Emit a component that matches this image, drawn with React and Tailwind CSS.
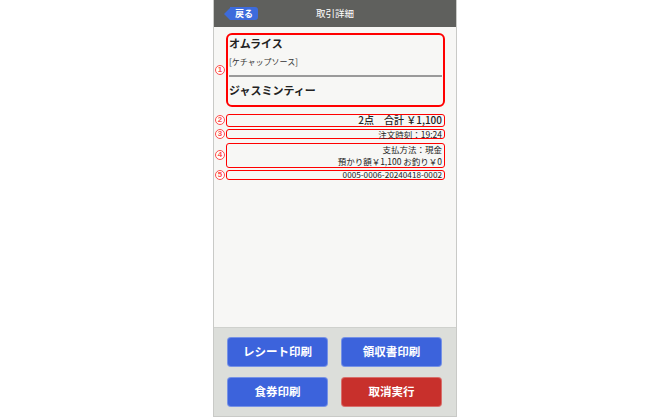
import React from "react";

const font = { fontFamily: '"Noto Sans CJK JP", "Noto Sans", sans-serif' };

// 注釈付きの行（丸数字 + 赤枠）
const Marked = ({ num, className, children }) => (
  <div className="flex items-center">
    <div className="w-[12px] shrink-0 flex justify-center">
      <span
        className="w-[10px] h-[10px] shrink-0 rounded-full border border-[#ff4d4d] bg-white flex items-center justify-center text-[8px] font-bold leading-none text-[#ff4d4d]"
        style={{ fontFamily: '"Liberation Sans", Arial, sans-serif' }}
      >
        {num}
      </span>
    </div>
    <div className={"flex-1 border-[#ff0000] " + className}>{children}</div>
  </div>
);

const ActionButton = ({ label, red }) => (
  <button
    className={
      "h-[30px] rounded-[4px] border border-white/30 text-white text-[11.5px] font-bold " +
      (red ? "bg-[#c8302c]" : "bg-[#3c63dc]")
    }
  >
    {label}
  </button>
);

export default function App() {
  return (
    <div className="w-[670px] h-[418px] bg-white flex justify-center" style={font}>
      <div className="w-[244px] h-[417px] flex flex-col border-x border-b border-[#c9cac7]">
        {/* Header */}
        <div className="h-[27px] bg-[#5f605d] grid grid-cols-[1fr_auto_1fr] items-center px-[10px]">
          <div className="flex items-center">
            <div className="w-0 h-0 border-y-[6.5px] border-y-transparent border-r-[6px] border-r-[#3d6bdb]"></div>
            <div className="h-[13px] w-[28px] bg-[#3d6bdb] rounded-r-[3px] flex items-center justify-center text-white text-[9px] font-bold leading-none">
              戻る
            </div>
          </div>
          <div className="text-white text-[9.5px] leading-none">取引詳細</div>
          <div></div>
        </div>

        {/* Content */}
        <div className="flex-1 bg-[#f7f7f5] pr-[11px] pt-[6px] flex flex-col">
          <Marked num="1" className="border-2 rounded-[6px] h-[74px] px-[1px] flex flex-col">
            <div className="h-[16px] flex items-center text-[11px] font-bold text-[#222]">オムライス</div>
            <div className="h-[22px] flex items-center text-[8px] text-[#333]">[ケチャップソース]</div>
            <div className="mt-[2px] h-[1.5px] bg-[#9a9a9a]"></div>
            <div className="h-[28px] flex items-center text-[11px] font-bold text-[#222]">ジャスミンティー</div>
          </Marked>

          <div className="mt-[7px]">
            <Marked num="2" className="border-[1.5px] rounded-[3px] h-[12.5px] flex items-center justify-end pr-[2px]">
              <span className="text-[10px] font-medium text-[#222] leading-none">2点　合計 ￥1,100</span>
            </Marked>
          </div>
          <div className="mt-[2px]">
            <Marked num="3" className="border-[1.5px] rounded-[3px] h-[10.5px] flex items-center justify-end pr-[2px]">
              <span className="text-[8.5px] text-[#222] leading-none">注文時刻：19:24</span>
            </Marked>
          </div>
          <div className="mt-[3.5px]">
            <Marked num="4" className="border-[1.5px] rounded-[3px] h-[25.5px] flex flex-col items-end justify-center pr-[2px] gap-[3.5px]">
              <span className="text-[8.5px] text-[#222] leading-none">支払方法：現金</span>
              <span className="text-[8.5px] text-[#222] leading-none">預かり額￥1,100 お釣り￥0</span>
            </Marked>
          </div>
          <div className="mt-[1.5px]">
            <Marked num="5" className="border-[1.5px] rounded-[3px] h-[10px] flex items-center justify-end pr-[2px]">
              <span className="text-[8.2px] text-[#222] leading-none">0005-0006-20240418-0002</span>
            </Marked>
          </div>
        </div>

        {/* Footer buttons */}
        <div className="h-[89px] bg-[#dcdeda] border-t border-[#cfd1cd] grid grid-cols-2 gap-x-[13px] gap-y-[10px] pl-[13px] pr-[14px] pt-[9px] content-start">
          <ActionButton label="レシート印刷" />
          <ActionButton label="領収書印刷" />
          <ActionButton label="食券印刷" />
          <ActionButton label="取消実行" red />
        </div>
      </div>
    </div>
  );
}
